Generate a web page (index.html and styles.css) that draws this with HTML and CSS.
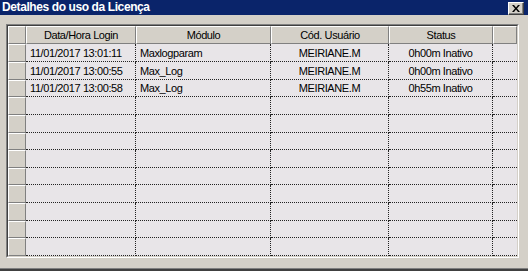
FILE: index.html
```html
<!DOCTYPE html>
<html>
<head>
<meta charset="utf-8">
<title>Detalhes do uso da Licença</title>
<link rel="stylesheet" href="styles.css">
</head>
<body>
<div class="window">
  <div class="titlebar">
    <span class="title">Detalhes do uso da Licença</span>
    <span class="close"><svg width="8" height="7" viewBox="0 0 8 7"><path d="M0 0h2l2 2.5 2-2.5h2l-3 3.5 3 3.5h-2l-2-2.5-2 2.5h-2l3-3.5z" fill="#000"/></svg></span>
  </div>
  <div class="body">
    <div class="frame">
      <div class="grid">
        <div class="hd"></div><div class="hd">Data/Hora Login</div><div class="hd">Módulo</div><div class="hd">Cód. Usuário</div><div class="hd">Status</div><div class="hd"></div>

        <div class="ind"></div><div class="cell">11/01/2017 13:01:11</div><div class="cell">Maxlogparam</div><div class="cell c">MEIRIANE.M</div><div class="cell c">0h00m Inativo</div><div class="cell last"></div>
        <div class="ind"></div><div class="cell">11/01/2017 13:00:55</div><div class="cell">Max_Log</div><div class="cell c">MEIRIANE.M</div><div class="cell c">0h00m Inativo</div><div class="cell last"></div>
        <div class="ind"></div><div class="cell">11/01/2017 13:00:58</div><div class="cell">Max_Log</div><div class="cell c">MEIRIANE.M</div><div class="cell c">0h55m Inativo</div><div class="cell last"></div>

        <div class="ind"></div><div class="cell"></div><div class="cell"></div><div class="cell"></div><div class="cell"></div><div class="cell last"></div>
        <div class="ind"></div><div class="cell"></div><div class="cell"></div><div class="cell"></div><div class="cell"></div><div class="cell last"></div>
        <div class="ind"></div><div class="cell"></div><div class="cell"></div><div class="cell"></div><div class="cell"></div><div class="cell last"></div>
        <div class="ind"></div><div class="cell"></div><div class="cell"></div><div class="cell"></div><div class="cell"></div><div class="cell last"></div>
        <div class="ind"></div><div class="cell"></div><div class="cell"></div><div class="cell"></div><div class="cell"></div><div class="cell last"></div>
        <div class="ind"></div><div class="cell"></div><div class="cell"></div><div class="cell"></div><div class="cell"></div><div class="cell last"></div>
        <div class="ind"></div><div class="cell"></div><div class="cell"></div><div class="cell"></div><div class="cell"></div><div class="cell last"></div>
        <div class="ind"></div><div class="cell"></div><div class="cell"></div><div class="cell"></div><div class="cell"></div><div class="cell last"></div>
        <div class="ind"></div><div class="cell"></div><div class="cell"></div><div class="cell"></div><div class="cell"></div><div class="cell last"></div>
      </div>
    </div>
  </div>
  <div class="bottom"></div>
</div>
</body>
</html>
```

FILE: styles.css
```css
html, body {
  margin:0;
  padding:0;
}
body {
  background:#d4d0c8;
  font-family:'Liberation Sans', Arial, sans-serif;
  color:#000;
}
.window {
  width:528px;
  height:271px;
  display:flex;
  flex-direction:column;
  background:#d4d0c8;
  overflow:hidden;
}
.titlebar {
  height:15px;
  background:#0a246a;
  display:flex;
  align-items:center;
  justify-content:space-between;
  padding:0 4px 0 2px;
}
.title {
  color:#fff;
  font-weight:bold;
  font-size:12px;
  letter-spacing:-0.4px;
  line-height:15px;
}
.close {
  box-sizing:border-box;
  width:16px;
  height:13px;
  margin-top:1px;
  background:#d4d0c8;
  border-top:1px solid #fff;
  border-left:1px solid #fff;
  border-right:1px solid #404040;
  border-bottom:1px solid #404040;
  box-shadow:inset -1px -1px 0 #808080;
  display:flex;
  align-items:center;
  justify-content:center;
}
.body {
  flex:1;
  padding:9px 9px 10px 6px;
}
.frame {
  border-top:1px solid #808080;
  border-left:1px solid #808080;
  border-right:1px solid #fff;
  border-bottom:1px solid #fff;
  width:max-content;
}
.grid {
  border-top:1px solid #404040;
  border-left:1px solid #404040;
  border-right:1px solid #d4d0c8;
  border-bottom:1px solid #d4d0c8;
  display:grid;
  grid-template-columns:18px 110px 135px 118px 104px 24px;
  grid-template-rows:18px 18px 18px 17px 18px 18px 17px 18px 17px 18px 18px 17px 18px;
  font-size:11px;
  letter-spacing:-0.4px;
}
.hd, .ind {
  box-sizing:border-box;
  background:#d4d0c8;
  border-top:1px solid #fff;
  border-left:1px solid #fff;
  border-right:1px solid #808080;
  border-bottom:1px solid #808080;
  display:flex;
  align-items:center;
  justify-content:center;
  white-space:nowrap;
}
.cell {
  box-sizing:border-box;
  background:#e8e5e8;
  border-right:1px dotted #222;
  border-bottom:1px dotted #222;
  display:flex;
  align-items:center;
  padding:0 4px;
  white-space:nowrap;
}
.cell.c {
  justify-content:center;
}
.cell.last {
  border-right:none;
}
.bottom {
  height:3px;
  box-sizing:border-box;
  border-top:1px solid #808080;
  background:#404040;
}
```
